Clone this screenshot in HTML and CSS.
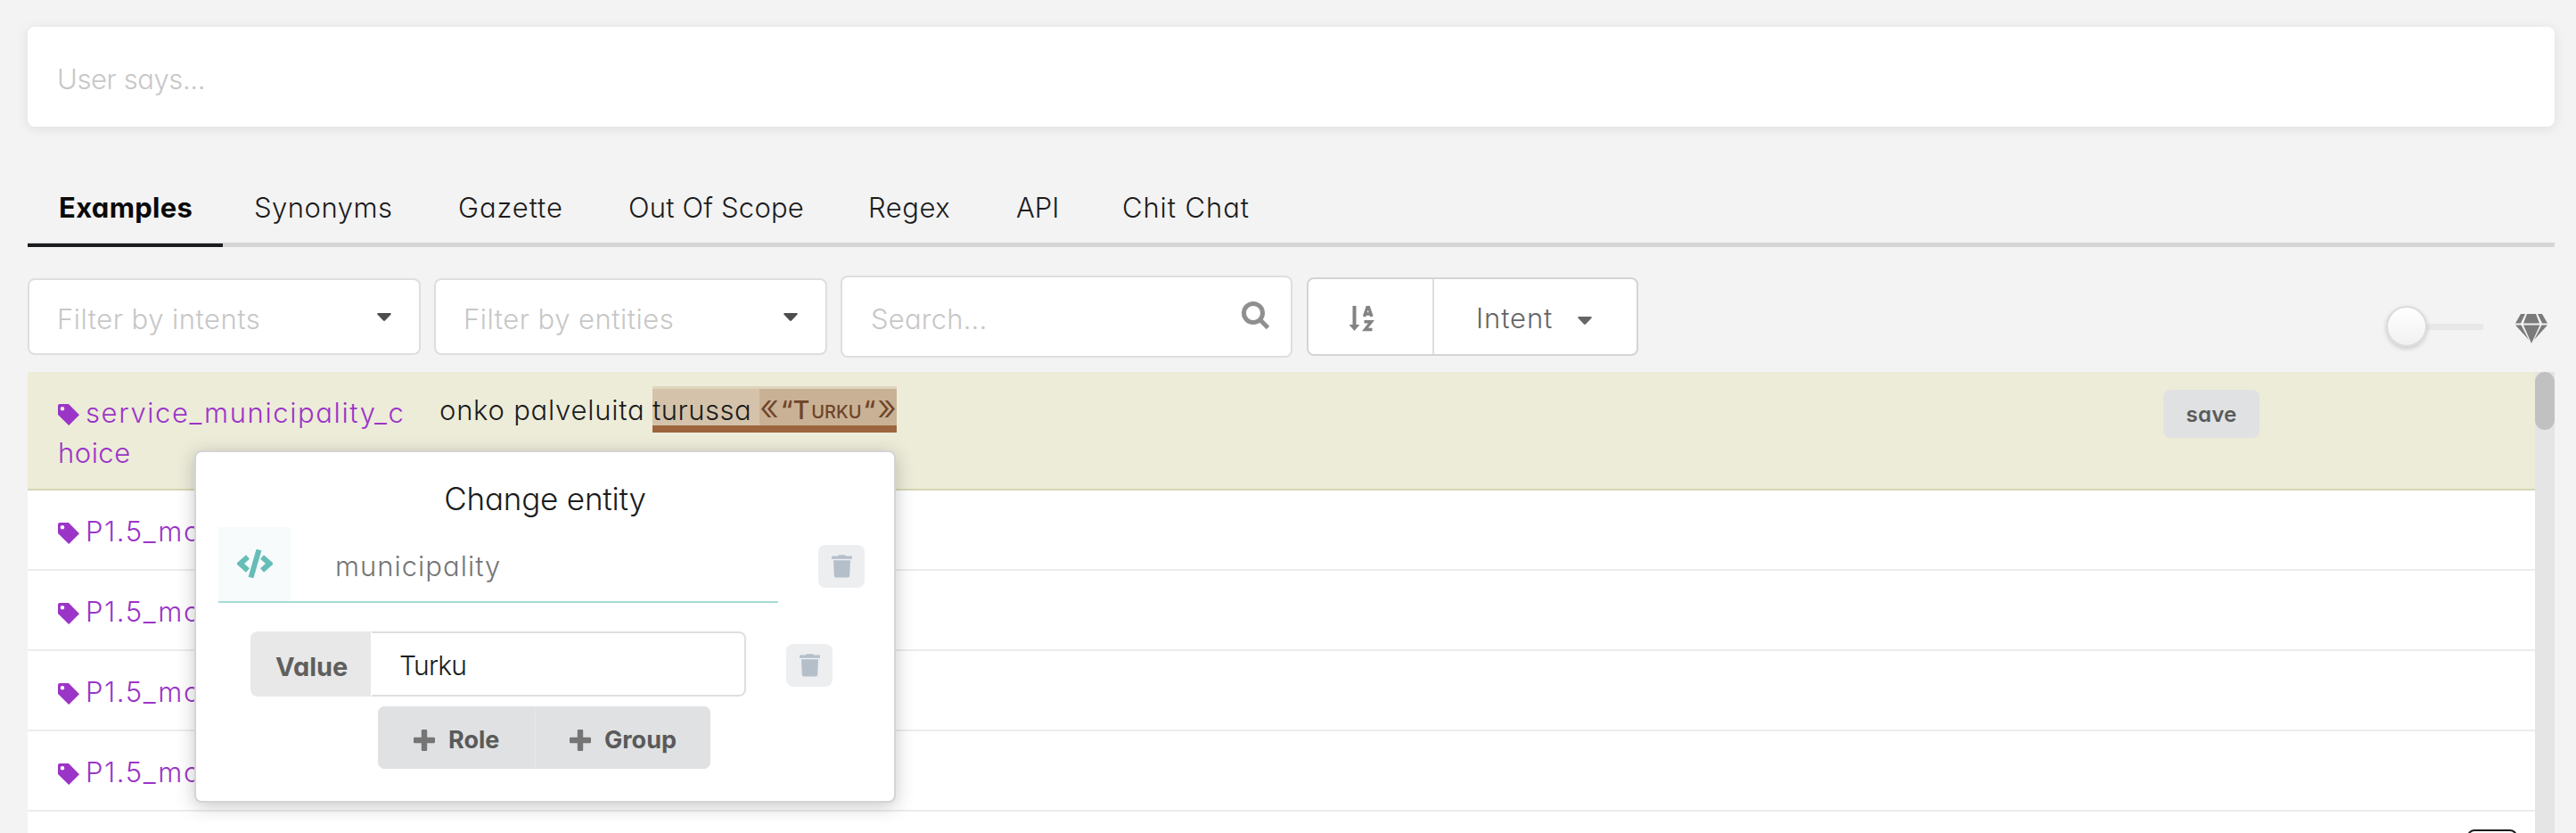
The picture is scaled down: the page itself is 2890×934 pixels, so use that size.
FILE: index.html
```html
<!DOCTYPE html>
<html lang="en">
<head>
<meta charset="utf-8">
<title>NLU training data</title>
<link rel="stylesheet" href="styles.css">
</head>
<body>
<svg class="defs" width="0" height="0">
  <symbol id="tag" viewBox="0 0 24 24"><path fill-rule="evenodd" d="M2 0h10l12 12.2L12.2 24 0 12V2a2 2 0 0 1 2-2zM5 2.900a2.300 2.300 0 1 0 0 4.600 2.300 2.300 0 0 0 0-4.600z"/></symbol>
  <symbol id="trash" viewBox="0 0 23 26"><path d="M1 1.500h6l1-1.300h7l1 1.300H22q1 0 1 1v2.300H0V2.500q0-1 1-1zM2 6.300h19l-.8 17.200q-.2 2-2 2H4.800q-1.800 0-2-2z"/></symbol>
  <symbol id="plus" viewBox="0 0 24 24"><path d="M10 0h4q1.200 0 1.200 1.200v7.600h7.600Q24 8.800 24 10v4q0 1.200-1.200 1.200h-7.600v7.600Q15.200 24 14 24h-4q-1.200 0-1.200-1.200v-7.600H1.200Q0 15.200 0 14v-4q0-1.200 1.200-1.200h7.600V1.200Q8.800 0 10 0z"/></symbol>
  <symbol id="caret" viewBox="0 0 16 9"><path d="M1 0h14q1.200.5.600 1.500L9 8.500q-1 .9-2 0L.4 1.500Q-.2.500 1 0z"/></symbol>
</svg>
<main class="page">
  <section class="says"><span>User says...</span></section>
  <nav class="tabs">
    <a class="tab active">Examples</a>
    <a class="tab synonyms">Synonyms</a>
    <a class="tab gazette">Gazette</a>
    <a class="tab scope">Out Of Scope</a>
    <a class="tab regex">Regex</a>
    <a class="tab api">API</a>
    <a class="tab chat">Chit Chat</a>
  </nav>
  <section class="filters">
    <div class="dropdown"><span>Filter by intents</span><svg class="caret"><use href="#caret"/></svg></div>
    <div class="dropdown"><span>Filter by entities</span><svg class="caret"><use href="#caret"/></svg></div>
    <div class="search"><span>Search...</span>
      <svg class="magnifier" viewBox="0 0 32 32"><circle cx="13" cy="13" r="10.500"/><path d="M20.500 20.500l9 9"/></svg></div>
    <div class="sort">
      <div class="sort-dir"><svg viewBox="0 0 29 29"><path class="line" d="M6.500 0v22"/><path d="M.5 21h12L6.500 28z"/><path class="glyph" d="M17.500 12l3.500-10.500h1.500L26 12M19 9h6M17.500 17.700h8l-7 8.800h8"/></svg></div>
      <div class="sort-by"><span>Intent</span><svg class="caret small"><use href="#caret"/></svg></div>
    </div>
    <div class="canonical">
      <div class="slider"><i class="knob"></i></div>
      <svg class="gem" viewBox="0 0 36 33"><path d="M6 0h5L6 10.500H0zM13 0h10l4 10.500H9zM25 0h5l6 10.500h-6zM0 12.500h6.500L15 29zM9 12.500h18.500L18 33zM29.500 12.500H36L21 29z"/></svg>
    </div>
  </section>
  <section class="list">
    <div class="rows">
      <div class="row selected">
        <div class="intent"><svg class="tag"><use href="#tag"/></svg><span class="name">service_municipality_c</span><br><span class="rest">hoice</span></div>
        <div class="utterance"><span class="words">onko palveluita</span><span class="entity"><span class="source">turussa</span><span class="value"><span class="quote">«</span>“T<span class="caps">urku</span>“<span class="quote">»</span></span></span></div>
        <button class="save">save</button>
      </div>
      <div class="row"><div class="intent"><svg class="tag"><use href="#tag"/></svg><span class="name">P1.5_mo</span></div></div>
      <div class="row"><div class="intent"><svg class="tag"><use href="#tag"/></svg><span class="name">P1.5_mo</span></div></div>
      <div class="row"><div class="intent"><svg class="tag"><use href="#tag"/></svg><span class="name">P1.5_mo</span></div></div>
      <div class="row"><div class="intent"><svg class="tag"><use href="#tag"/></svg><span class="name">P1.5_mo</span></div></div>
      <div class="row last"><i class="chip"></i></div>
    </div>
    <div class="scrollbar"><i></i></div>
    <aside class="popup">
      <h2>Change entity</h2>
      <div class="entity-row">
        <div class="entity-field">
          <div class="code"><svg viewBox="0 0 40 32"><path d="M12 8.500L3.500 16l8.500 7.500M28 8.500l8.500 7.500-8.500 7.500"/><path d="M24.500.500l-9 31"/></svg></div>
          <span class="entity-name">municipality</span>
        </div>
        <button class="delete"><svg><use href="#trash"/></svg></button>
      </div>
      <div class="value-row">
        <label>Value</label>
        <div class="input">Turku</div>
        <button class="delete"><svg><use href="#trash"/></svg></button>
      </div>
      <div class="actions">
        <button class="role"><svg><use href="#plus"/></svg><span>Role</span></button>
        <button class="group"><svg><use href="#plus"/></svg><span>Group</span></button>
      </div>
    </aside>
  </section>
</main>
</body>
</html>
```

FILE: styles.css
```css
* { box-sizing: border-box; }
body {
  margin: 0; height: 934px; overflow: hidden; background: #f3f3f3;
  font: 350 31px/45px Inter, "Open Sans", sans-serif;
  font-feature-settings: "cv11"; color: #1b1c1d;
}
.defs { position: absolute; }
svg { flex: none; }
span { white-space: nowrap; }
button { border: 0; font: inherit; color: #5a5a5a; background: #e0e1e2; padding: 0; margin: 0; font-feature-settings: inherit; }
.page { padding: 30px 24px 0 31px; }
.says {
  height: 112px; padding: 36px 33px 0; background: #fff; border-radius: 8px; color: #c7c7c7; letter-spacing: -.4px;
  box-shadow: 0 2px 14px rgba(0, 0, 0, .09);
}
.tabs { display: flex; margin-top: 50px; height: 85px; border-bottom: 5px solid #d5d5d6; }
.tab { height: 85px; padding-left: 35px; line-height: 81px; white-space: nowrap; }
.active { width: 219px; border-bottom: 4px solid #1b1c1d; font-weight: 650; color: #0a0a0a; letter-spacing: .3px; }
.synonyms { width: 229px; letter-spacing: .5px; }
.gazette { width: 191px; letter-spacing: .9px; }
.scope { width: 269px; letter-spacing: .2px; }
.regex { width: 166px; letter-spacing: .5px; }
.api { width: 119px; }
.chat { letter-spacing: .9px; }
.filters { display: flex; align-items: center; height: 92px; margin-top: 32px; }
.dropdown {
  display: flex; justify-content: space-between; width: 441px; height: 86px; margin-right: 15px; letter-spacing: .5px;
  padding: 21px 31px 0; background: #fff; border: 2px solid #dedede; border-radius: 8px; color: #c7c7c7;
}
.caret { width: 16px; height: 9px; fill: #4d4d4d; margin-top: 16px; }
.search {
  display: flex; justify-content: space-between; width: 507px; height: 92px; padding: 24px 23px 0 32px; margin-right: 16px;
  background: #fff; border: 2px solid #dedede; border-radius: 8px; color: #c7c7c7; letter-spacing: .2px;
}
.magnifier { width: 32px; height: 32px; margin-top: 3px; fill: none; stroke: #8f8f8f; stroke-width: 5; }
.sort { display: flex; width: 372px; height: 88px; background: #fff; border: 2px solid #d4d4d5; border-radius: 8px; color: #666; }
.sort-dir { width: 141px; border-right: 2px solid #dedede; padding: 30px 0 0 45px; }
.sort-dir svg { display: block; width: 29px; height: 29px; fill: #838383; }
.sort-dir .line { stroke: #838383; stroke-width: 4; }
.sort-dir .glyph { fill: none; stroke: #838383; stroke-width: 3.400; }
.sort-by { display: flex; padding: 21px 0 0 47px; letter-spacing: .9px; }
.small { margin: 21px 0 0 28px; fill: #666; }
.canonical { display: flex; align-items: center; margin: 22px 8px 0 auto; }
.slider { position: relative; width: 108px; height: 46px; background: linear-gradient(#e8e8e8, #e8e8e8) 0 20px / 108px 7px no-repeat; margin-right: 36px; }
.knob {
  position: absolute; left: -1px; top: 0; width: 46px; height: 46px; border: 2px solid #dbdbdb; border-radius: 50%;
  background: linear-gradient(#fff, #f1f1f1); box-shadow: 0 2px 5px rgba(34, 36, 38, .2);
}
.gem { width: 36px; height: 33px; fill: #7a7a7a; margin-top: 5px; }
.list { position: relative; display: flex; height: 517px; margin-top: 16px; }
.rows { width: 2813px; background: #fff; }
.row { display: flex; height: 90px; padding: 23px 34px 0; border-bottom: 2px solid #ececec; }
.selected { height: 133px; background: #edecd9; border-color: #d4d7b4; }
.intent { width: 428px; color: #9b35c7; }
.name { letter-spacing: 1.600px; }
.rest { letter-spacing: .5px; }
.tag { width: 24px; height: 24px; margin-right: 7px; fill: #9b35c7; vertical-align: -3px; }
.utterance { display: flex; height: 60px; margin-top: -7px; line-height: 53px; }
.words { width: 239px; letter-spacing: .75px; }
.entity { display: flex; height: 52px; background: #ded5bd; border-bottom: 8px solid #9d653e; }
.source { width: 120px; height: 41px; margin-top: 3px; background: #d4c3aa; line-height: 47px; letter-spacing: .5px; }
.value {
  display: flex; justify-content: space-between; width: 154px; height: 41px; margin-top: 3px; background: #c9b195;
  line-height: 47px; color: #6f442a; font-size: 29px; font-weight: 550;
}
.caps { text-transform: uppercase; font-size: 20px; line-height: 53px; }
.quote { font-size: 41px; font-weight: 300; line-height: 41px; }
.save { width: 108px; height: 54px; margin: -3px 275px 0 auto; border-radius: 8px; font-weight: 600; font-size: 24px; letter-spacing: .2px; }
.last { border: 0; height: 24px; padding: 20px 20px 0 0; overflow: hidden; justify-content: flex-end; }
.chip { width: 56px; height: 30px; border: 2px solid #1b1c1d; border-radius: 8px; }
.scrollbar { width: 22px; background: #e5e5e5; }
.scrollbar i { display: block; height: 65px; border-radius: 11px; background: #c1c1c1; }
.popup {
  position: absolute; left: 187px; top: 88px; width: 787px; height: 395px; padding: 31px 25px 0;
  background: #fff; border: 2px solid #d4d4d5; border-radius: 8px; box-shadow: 0 4px 20px 0 rgba(34, 36, 38, .25);
}
h2 { margin: 0; text-align: center; font-weight: 350; font-size: 35px; line-height: 42px; letter-spacing: -.2px; }
.entity-row { display: flex; margin-top: 11px; }
.entity-field { display: flex; width: 628px; height: 85px; border-bottom: 2px solid #a6dad6; color: #767676; line-height: 87px; }
.entity-name { letter-spacing: 1px; }
.code { width: 81px; height: 83px; margin-right: 50px; padding: 25px 0 0 21px; background: #f7fbfb; }
.code svg { display: block; width: 40px; height: 32px; fill: none; stroke: #66bdb7; stroke-width: 6; }
.delete { display: flex; align-items: flex-start; width: 52px; height: 48px; border-radius: 8px; background: #edeef0; margin: 20px 0 0 45px; padding: 11px 0 0 15px; }
.delete svg { width: 23px; height: 26px; fill: #b4bfca; }
.value-row { display: flex; margin: 32px 0 0 36px; }
.value-row label { width: 135px; height: 73px; padding-left: 28px; background: #e8e8e8; border-radius: 8px 0 0 8px; font-size: 29px; font-weight: 650; line-height: 79px; color: #5f5f5f; }
.input { width: 421px; height: 73px; padding-left: 30px; border: 2px solid #dedede; border-left-color: #fff; border-radius: 0 8px 8px 0; font-size: 30px; line-height: 72px; letter-spacing: -.8px; }
.value-row .delete { margin-top: 14px; }
.actions { display: flex; width: 373px; height: 70px; margin: 11px 0 0 179px; background: #e0e1e2; border-radius: 8px; overflow: hidden; }
.actions button { display: flex; align-items: center; padding: 5px 0 0 40px; font-weight: 650; font-size: 27px; }
.actions svg { width: 24px; height: 24px; margin-right: 15px; fill: #757575; }
.role { width: 176px; }
.actions .group { width: 197px; padding-left: 38px; border-left: 1px solid #e6e7e8; }
```
